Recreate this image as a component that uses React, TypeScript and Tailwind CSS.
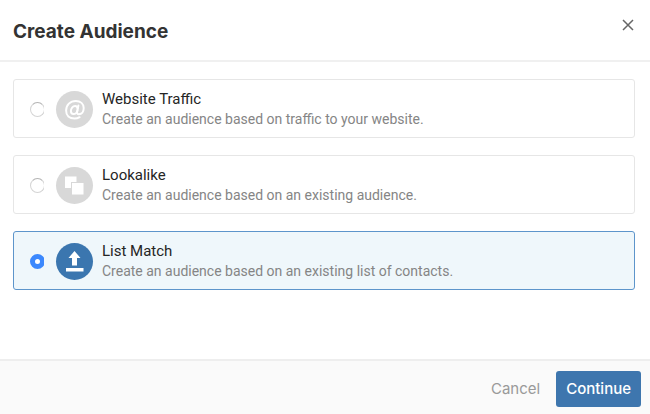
import { useState } from "react"
import type { ReactNode } from "react"

type Option = {
    id: string
    title: string
    description: string
    icon: ReactNode
}

const OPTIONS: Option[] = [
    {
        id: "website-traffic",
        title: "Website Traffic",
        description: "Create an audience based on traffic to your website.",
        icon: (
            <g fill="none" stroke="currentColor" strokeWidth="2" strokeLinecap="round" strokeLinejoin="round">
                <path d="M23.6 26.2c-1.5.9-3.2 1.4-5.1 1.4-5 0-8.4-3.2-8.4-8 0-5.7 4.2-9.7 9.7-9.7 4.7 0 7.9 2.9 7.9 7.2 0 3.7-2.1 6.2-4.7 6.2-1.5 0-2.2-.9-1.9-2.5l1.3-6.2" />
                <path d="M21.7 17.6c-.3-1.5-1.2-2.5-2.6-2.5-2.4 0-4.2 2.3-4.2 4.9 0 1.9 1 3.1 2.6 3.1 2.1 0 3.5-1.5 4-3.7" />
            </g>
        ),
    },
    {
        id: "lookalike",
        title: "Lookalike",
        description: "Create an audience based on an existing audience.",
        icon: (
            <g fill="currentColor">
                <path d="M9 9.5h11.5v5.5h-5.5v6h-6z" />
                <path d="M16 16h11.5v11.5h-11.5z" />
            </g>
        ),
    },
    {
        id: "list-match",
        title: "List Match",
        description: "Create an audience based on an existing list of contacts.",
        icon: (
            <g fill="currentColor">
                <path d="M18.5 8l6 7h-3.5v7.5h-5v-7.5h-3.5z" />
                <path d="M10 25h17.5v3.5h-17.5z" />
            </g>
        ),
    },
]

const OptionCard = ({
    option,
    checked,
    onSelect,
}: {
    option: Option
    checked: boolean
    onSelect: () => void
}) => (
    <label
        htmlFor={option.id}
        className={[
            "flex cursor-pointer items-center rounded-[3px] border px-4 pb-2 pt-[9px]",
            checked ? "border-[#5d95cb] bg-[#eff7fb]" : "border-[#e6e6e6] bg-white",
        ].join(" ")}
    >
        <span className="flex w-[14px] shrink-0 overflow-hidden">
            <input
                type="radio"
                id={option.id}
                name="audience-type"
                checked={checked}
                onChange={onSelect}
                className="size-[15px] shrink-0 appearance-none rounded-full border border-[#d4d4d4] border-t-[#b4b4b4] bg-white checked:border-[5px] checked:border-[#3b88fd]"
            />
        </span>
        <svg
            viewBox="0 0 37 37"
            aria-hidden="true"
            className={[
                "ml-3 size-[37px] shrink-0 rounded-full text-white",
                checked ? "bg-[#3b76af]" : "bg-[#d8d8d8]",
            ].join(" ")}
        >
            {option.icon}
        </svg>
        <span className="ml-[9px] flex flex-col font-['Roboto','Liberation_Sans',sans-serif] text-sm leading-5">
            <span className="text-[15px] leading-5 text-[#252525]">{option.title}</span>
            <span className="text-[#858585]">{option.description}</span>
        </span>
    </label>
)

export default function App() {
    const [selected, setSelected] = useState("list-match")

    return (
        <main className="flex min-h-screen flex-col bg-white font-['Inter','Liberation_Sans',sans-serif]">
            <header className="flex items-start justify-between border-b-2 border-[#f0f0f0] px-[13px] pb-3 pt-4">
                <h1 className="text-[19px] font-bold leading-8 text-[#333]">Create Audience</h1>
                <button type="button" aria-label="Close" className="flex size-[18px] items-center justify-center text-[#666]">
                    <svg viewBox="0 0 12 12" className="size-3" fill="none" stroke="currentColor" strokeWidth="1.5">
                        <path d="M1 1l10 10M11 1L1 11" />
                    </svg>
                </button>
            </header>

            <fieldset
                aria-label="Audience type"
                className="flex flex-1 flex-col gap-[17px] pb-4 pl-[13px] pr-[15px] pt-[17px]"
            >
                {OPTIONS.map((option) => (
                    <OptionCard
                        key={option.id}
                        option={option}
                        checked={selected === option.id}
                        onSelect={() => setSelected(option.id)}
                    />
                ))}
            </fieldset>

            <footer className="flex items-center justify-end gap-4 border-t-2 border-[#eee] bg-[#fafafa] pb-[7px] pr-[9px] pt-[10px]">
                <button type="button" className="text-[15px] text-[#999]">
                    Cancel
                </button>
                <button type="button" className="h-9 rounded-[3px] bg-[#3e76ae] px-[10px] text-[15px] font-medium text-white">
                    Continue
                </button>
            </footer>
        </main>
    )
}
